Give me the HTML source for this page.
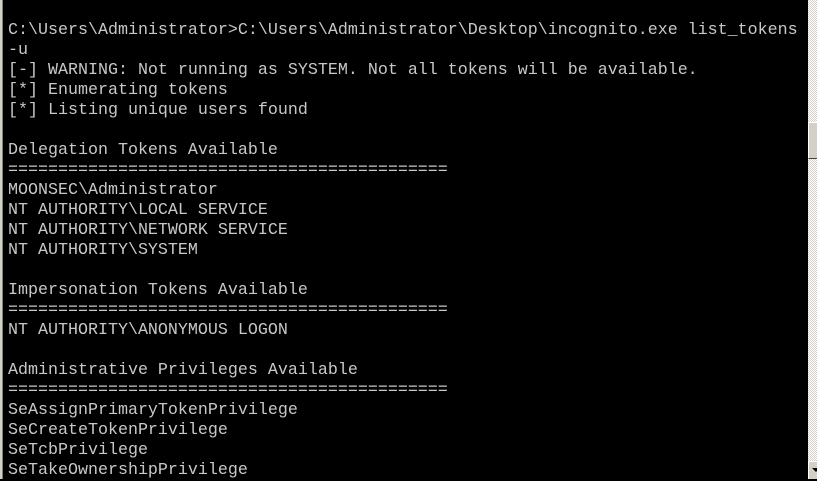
<!DOCTYPE html>
<html><head><style>
html,body{margin:0;padding:0;}
body{width:817px;height:479px;background:#000;position:relative;overflow:hidden;}
.lb{position:absolute;left:0;top:0;width:2px;height:479px;background:#d4d0c8;}
.lb2{position:absolute;left:2px;top:0;width:1px;height:479px;background:#808080;}
pre{position:absolute;left:8px;top:21px;margin:0;font-family:"Liberation Mono",monospace;font-size:16.67px;line-height:20px;color:#c8c8c8;white-space:pre;}
.sb{position:absolute;left:808px;top:0;width:9px;height:479px;background-color:#e8e6e0;background-image:repeating-conic-gradient(#fff 0 25%,#d4d0c8 0 50%);background-size:2px 2px;}
.th{position:absolute;left:808px;top:122px;width:9px;height:37px;background:#d4d0c8;border-top:1px solid #fff;border-left:1px solid #fff;border-bottom:1px solid #404040;box-sizing:border-box;}
.dn{position:absolute;left:808px;top:461px;width:9px;height:18px;background:#d4d0c8;border-top:1px solid #fff;border-left:1px solid #fff;box-sizing:border-box;}
.ar{position:absolute;left:812px;top:468px;width:0;height:0;border-left:4px solid transparent;border-right:4px solid transparent;border-top:4px solid #000;}
</style></head><body>
<div class="lb"></div><div class="lb2"></div>
<pre>C:\Users\Administrator&gt;C:\Users\Administrator\Desktop\incognito.exe list_tokens
-u
[-] WARNING: Not running as SYSTEM. Not all tokens will be available.
[*] Enumerating tokens
[*] Listing unique users found

Delegation Tokens Available
============================================
MOONSEC\Administrator
NT AUTHORITY\LOCAL SERVICE
NT AUTHORITY\NETWORK SERVICE
NT AUTHORITY\SYSTEM

Impersonation Tokens Available
============================================
NT AUTHORITY\ANONYMOUS LOGON

Administrative Privileges Available
============================================
SeAssignPrimaryTokenPrivilege
SeCreateTokenPrivilege
SeTcbPrivilege
SeTakeOwnershipPrivilege</pre>
<div class="sb"></div><div class="th"></div><div class="dn"></div><div class="ar"></div>
</body></html>
